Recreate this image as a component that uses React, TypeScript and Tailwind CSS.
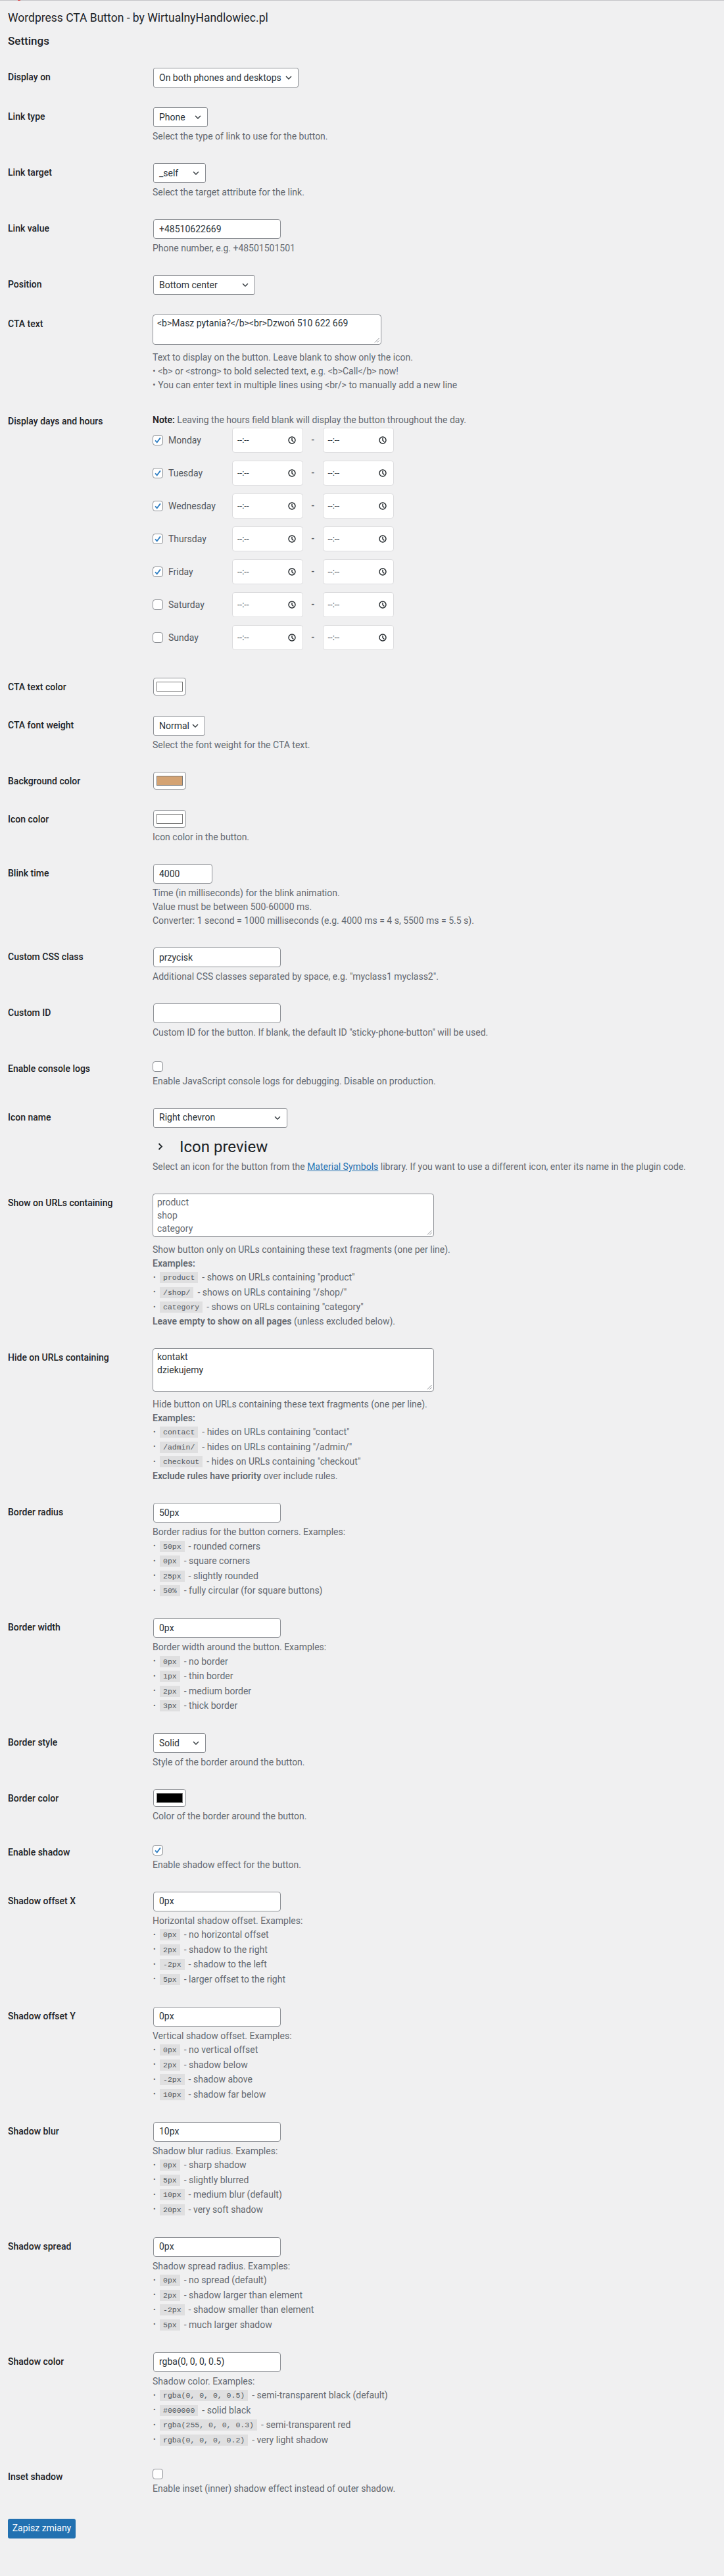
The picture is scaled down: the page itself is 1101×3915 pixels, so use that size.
import type { ReactNode } from 'react'

const days = [
  { name: 'Monday', on: true },
  { name: 'Tuesday', on: true },
  { name: 'Wednesday', on: true },
  { name: 'Thursday', on: true },
  { name: 'Friday', on: true },
  { name: 'Saturday', on: false },
  { name: 'Sunday', on: false },
]

function Row({ label, children }: { label: string; children: ReactNode }) {
  return (
    <div className="flex">
      <div className="w-[220px] shrink-0 py-[20px] text-[14px] leading-[18px] font-medium text-[#1d2327]">{label}</div>
      <div className="py-[15px] min-w-0">{children}</div>
    </div>
  )
}

function Desc({ children, className = '' }: { children: ReactNode; className?: string }) {
  return <p className={`mt-[4px] text-[14px] leading-[21px] text-[#646970] whitespace-nowrap ${className}`}>{children}</p>
}

function Line({ children }: { children: ReactNode }) {
  return <p className="text-[14px] leading-[21px] text-[#646970] whitespace-nowrap">{children}</p>
}

function Item({ code, text }: { code: string; text: string }) {
  return (
    <div className="flex items-center h-[22.5px] text-[14px] text-[#646970] whitespace-nowrap">
      <span className="w-[11px] pl-[1px] text-[11px]">•</span>
      <code className="h-[17px] px-[5px] bg-black/[.07] font-['Liberation_Mono',monospace] text-[11.5px] leading-[17px] text-[#50575e]">{code}</code>
      <span className="ml-[6px]">- {text}</span>
    </div>
  )
}

function Chevron() {
  return (
    <svg width="10" height="6" viewBox="0 0 10 6" className="shrink-0">
      <polyline points="1,1 5,5 9,1" fill="none" stroke="#2c3338" strokeWidth="1.4" />
    </svg>
  )
}

function Select({ value, w }: { value: string; w: string }) {
  return (
    <div className={`ml-px h-[30px] ${w} flex items-center justify-between pl-[8px] pr-[9px] bg-white border border-[#8c8f94] rounded-[3px] text-[14px] text-[#2c3338]`}>
      <span className="whitespace-nowrap">{value}</span>
      <Chevron />
    </div>
  )
}

function Input({ value = '', w = 'w-[194px]' }: { value?: string; w?: string }) {
  return (
    <div className={`ml-px h-[30px] ${w} flex items-center px-[8px] bg-white border border-[#8c8f94] rounded-[4px] text-[14px] text-[#2c3338]`}>
      {value}
    </div>
  )
}

function Color({ color }: { color: string }) {
  return (
    <div className="ml-px w-[50px] h-[27px] flex items-center justify-center bg-white border border-[#8c8f94] rounded-[4px]">
      <div className="w-[40px] h-[15px] border border-[#767676]" style={{ backgroundColor: color }} />
    </div>
  )
}

function Check({ on }: { on: boolean }) {
  return (
    <div className="w-[16px] h-[16px] shrink-0 bg-white border border-[#8c8f94] rounded-[4px] flex items-center justify-center">
      {on && (
        <svg width="14" height="14" viewBox="0 0 16 16">
          <polyline points="3.5,8.5 6.5,11.8 12.5,3.8" fill="none" stroke="#3582c4" strokeWidth="2.2" />
        </svg>
      )}
    </div>
  )
}

function CheckField({ on }: { on: boolean }) {
  return (
    <div className="h-[18.5px] pt-[2.5px]">
      <Check on={on} />
    </div>
  )
}

function Clock() {
  return (
    <svg width="12" height="12" viewBox="0 0 12 12">
      <circle cx="6" cy="6" r="5" fill="none" stroke="#1d2327" strokeWidth="1.4" />
      <polyline points="6,2.8 6,6.2 8.4,8.4" fill="none" stroke="#1d2327" strokeWidth="1.4" />
    </svg>
  )
}

function TimeBox() {
  return (
    <div className="w-[108px] h-[38px] flex items-center justify-between pl-[7px] pr-[10px] bg-white border border-[#dcdcde] rounded-[4px] text-[13px] text-[#2c3338]">
      <span>--:--</span>
      <Clock />
    </div>
  )
}

function Area({ w, lines, muted = false }: { w: string; lines: string[]; muted?: boolean }) {
  return (
    <div className={`relative ${w} px-[6px] py-[2px] bg-white border border-[#8c8f94] rounded-[4px] text-[14px] leading-[20px] ${muted ? 'text-[#646970]' : 'text-[#2c3338]'}`}>
      {lines.map((l, i) => (
        <div key={i} className="h-[20px] whitespace-nowrap">{l}</div>
      ))}
      <svg width="8" height="8" viewBox="0 0 8 8" className="absolute right-[2px] bottom-[2px]">
        <line x1="1" y1="7.5" x2="7.5" y2="1" stroke="#8c8f94" strokeWidth="1" />
        <line x1="4.5" y1="7.5" x2="7.5" y2="4.5" stroke="#8c8f94" strokeWidth="1" />
      </svg>
    </div>
  )
}

export default function App() {
  return (
    <div className="min-h-[3915px] bg-[#f0f0f1] font-['Roboto','Liberation_Sans',sans-serif]">
      <div className="flex h-px">
        <div className="w-[27px] bg-[#c3c4c7]" />
        <div className="w-[4px] bg-[#d63638]" />
        <div className="flex-1 bg-[#c3c4c7]" />
      </div>
      <div className="pl-3 pt-[14px]">
        <h1 className="text-[17.5px] leading-[24px] text-[#1d2327]">Wordpress CTA Button - by WirtualnyHandlowiec.pl</h1>
        <h2 className="mt-[12px] text-[17px] leading-[22px] font-medium text-[#1d2327]">Settings</h2>

        <div className="mt-[15px]">
          <Row label="Display on">
            <Select value="On both phones and desktops" w="w-[221px]" />
          </Row>
          <Row label="Link type">
            <Select value="Phone" w="w-[83px]" />
            <Desc>Select the type of link to use for the button.</Desc>
          </Row>
          <Row label="Link target">
            <Select value="_self" w="w-[80px]" />
            <Desc>Select the target attribute for the link.</Desc>
          </Row>
          <Row label="Link value">
            <Input value="+48510622669" />
            <Desc>Phone number, e.g. +48501501501</Desc>
          </Row>
          <Row label="Position">
            <Select value="Bottom center" w="w-[155px]" />
          </Row>
          <Row label="CTA text">
            <Area w="w-[348px]" lines={['<b>Masz pytania?</b><br>Dzwoń 510 622 669', '']} />
            <div className="mt-[8.5px] leading-[21.5px]">
              <Line>Text to display on the button. Leave blank to show only the icon.</Line>
              <Line>• &lt;b&gt; or &lt;strong&gt; to bold selected text, e.g. &lt;b&gt;Call&lt;/b&gt; now!</Line>
              <Line>• You can enter text in multiple lines using &lt;br/&gt; to manually add a new line</Line>
            </div>
          </Row>
          <Row label="Display days and hours">
            <p className="mt-[2px] text-[14px] leading-[21px] text-[#646970] whitespace-nowrap">
              <span className="font-semibold text-[#1d2327]">Note:</span> Leaving the hours field blank will display the button throughout the day.
            </p>
            <div className="mt-[1.5px]">
              {days.map((d) => (
                <div key={d.name} className="flex items-center h-[38px] mb-[12px]">
                  <div className="w-[121px] flex items-center">
                    <Check on={d.on} />
                    <span className="ml-[8px] text-[14px] text-[#50575e]">{d.name}</span>
                  </div>
                  <TimeBox />
                  <span className="w-[29.5px] text-center text-[13px] font-bold text-[#50575e]">-</span>
                  <TimeBox />
                </div>
              ))}
            </div>
          </Row>
          <Row label="CTA text color">
            <Color color="#ffffff" />
          </Row>
          <Row label="CTA font weight">
            <Select value="Normal" w="w-[79px]" />
            <Desc>Select the font weight for the CTA text.</Desc>
          </Row>
          <Row label="Background color">
            <Color color="#d4a373" />
          </Row>
          <Row label="Icon color">
            <Color color="#ffffff" />
            <Desc>Icon color in the button.</Desc>
          </Row>
          <Row label="Blink time">
            <Input value="4000" w="w-[90px]" />
            <Desc>
              Time (in milliseconds) for the blink animation.
              <br />
              Value must be between 500-60000 ms.
              <br />
              Converter: 1 second = 1000 milliseconds (e.g. 4000 ms = 4 s, 5500 ms = 5.5 s).
            </Desc>
          </Row>
          <Row label="Custom CSS class">
            <Input value="przycisk" />
            <Desc>Additional CSS classes separated by space, e.g. "myclass1 myclass2".</Desc>
          </Row>
          <Row label="Custom ID">
            <Input />
            <Desc>Custom ID for the button. If blank, the default ID "sticky-phone-button" will be used.</Desc>
          </Row>
          <Row label="Enable console logs">
            <CheckField on={false} />
            <Desc className="mt-[3px]">Enable JavaScript console logs for debugging. Disable on production.</Desc>
          </Row>
          <Row label="Icon name">
            <Select value="Right chevron" w="w-[204px]" />
            <div className="mt-[14px] h-[30px] flex items-center">
              <svg width="8" height="11" viewBox="0 0 8 11" className="ml-[8px]">
                <polyline points="1.5,1 6,5.5 1.5,10" fill="none" stroke="#1d2327" strokeWidth="1.8" />
              </svg>
              <span className="ml-[25px] text-[24px] leading-[30px] text-[#1d2327]">Icon preview</span>
            </div>
            <Desc className="mt-[5.5px]">
              Select an icon for the button from the <span className="text-[#2271b1] underline">Material Symbols</span> library. If you want to use a different icon, enter its name in the plugin code.
            </Desc>
          </Row>
          <Row label="Show on URLs containing">
            <Area w="w-[428px]" lines={['product', 'shop', 'category']} muted />
            <div className="mt-[8.5px]">
              <Line>Show button only on URLs containing these text fragments (one per line).</Line>
              <Line><span className="font-semibold">Examples:</span></Line>
              <Item code="product" text={'shows on URLs containing "product"'} />
              <Item code="/shop/" text={'shows on URLs containing "/shop/"'} />
              <Item code="category" text={'shows on URLs containing "category"'} />
              <Line><span className="font-semibold">Leave empty to show on all pages</span> (unless excluded below).</Line>
            </div>
          </Row>
          <Row label="Hide on URLs containing">
            <Area w="w-[428px]" lines={['kontakt', 'dziekujemy', '']} />
            <div className="mt-[8.5px]">
              <Line>Hide button on URLs containing these text fragments (one per line).</Line>
              <Line><span className="font-semibold">Examples:</span></Line>
              <Item code="contact" text={'hides on URLs containing "contact"'} />
              <Item code="/admin/" text={'hides on URLs containing "/admin/"'} />
              <Item code="checkout" text={'hides on URLs containing "checkout"'} />
              <Line><span className="font-semibold">Exclude rules have priority</span> over include rules.</Line>
            </div>
          </Row>
          <Row label="Border radius">
            <Input value="50px" />
            <Desc>Border radius for the button corners. Examples:</Desc>
            <Item code="50px" text="rounded corners" />
            <Item code="0px" text="square corners" />
            <Item code="25px" text="slightly rounded" />
            <Item code="50%" text="fully circular (for square buttons)" />
          </Row>
          <Row label="Border width">
            <Input value="0px" />
            <Desc>Border width around the button. Examples:</Desc>
            <Item code="0px" text="no border" />
            <Item code="1px" text="thin border" />
            <Item code="2px" text="medium border" />
            <Item code="3px" text="thick border" />
          </Row>
          <Row label="Border style">
            <Select value="Solid" w="w-[80px]" />
            <Desc>Style of the border around the button.</Desc>
          </Row>
          <Row label="Border color">
            <Color color="#000000" />
            <Desc>Color of the border around the button.</Desc>
          </Row>
          <Row label="Enable shadow">
            <CheckField on={true} />
            <Desc className="mt-[3px]">Enable shadow effect for the button.</Desc>
          </Row>
          <Row label="Shadow offset X">
            <Input value="0px" />
            <Desc>Horizontal shadow offset. Examples:</Desc>
            <Item code="0px" text="no horizontal offset" />
            <Item code="2px" text="shadow to the right" />
            <Item code="-2px" text="shadow to the left" />
            <Item code="5px" text="larger offset to the right" />
          </Row>
          <Row label="Shadow offset Y">
            <Input value="0px" />
            <Desc>Vertical shadow offset. Examples:</Desc>
            <Item code="0px" text="no vertical offset" />
            <Item code="2px" text="shadow below" />
            <Item code="-2px" text="shadow above" />
            <Item code="10px" text="shadow far below" />
          </Row>
          <Row label="Shadow blur">
            <Input value="10px" />
            <Desc>Shadow blur radius. Examples:</Desc>
            <Item code="0px" text="sharp shadow" />
            <Item code="5px" text="slightly blurred" />
            <Item code="10px" text="medium blur (default)" />
            <Item code="20px" text="very soft shadow" />
          </Row>
          <Row label="Shadow spread">
            <Input value="0px" />
            <Desc>Shadow spread radius. Examples:</Desc>
            <Item code="0px" text="no spread (default)" />
            <Item code="2px" text="shadow larger than element" />
            <Item code="-2px" text="shadow smaller than element" />
            <Item code="5px" text="much larger shadow" />
          </Row>
          <Row label="Shadow color">
            <Input value="rgba(0, 0, 0, 0.5)" />
            <Desc>Shadow color. Examples:</Desc>
            <Item code="rgba(0, 0, 0, 0.5)" text="semi-transparent black (default)" />
            <Item code="#000000" text="solid black" />
            <Item code="rgba(255, 0, 0, 0.3)" text="semi-transparent red" />
            <Item code="rgba(0, 0, 0, 0.2)" text="very light shadow" />
          </Row>
          <Row label="Inset shadow">
            <CheckField on={false} />
            <Desc className="mt-[3px]">Enable inset (inner) shadow effect instead of outer shadow.</Desc>
          </Row>
        </div>

        <button className="mt-[19.5px] w-[103px] h-[30px] bg-[#2271b1] text-white text-[14px] rounded-[3px]">Zapisz zmiany</button>
      </div>
    </div>
  )
}
